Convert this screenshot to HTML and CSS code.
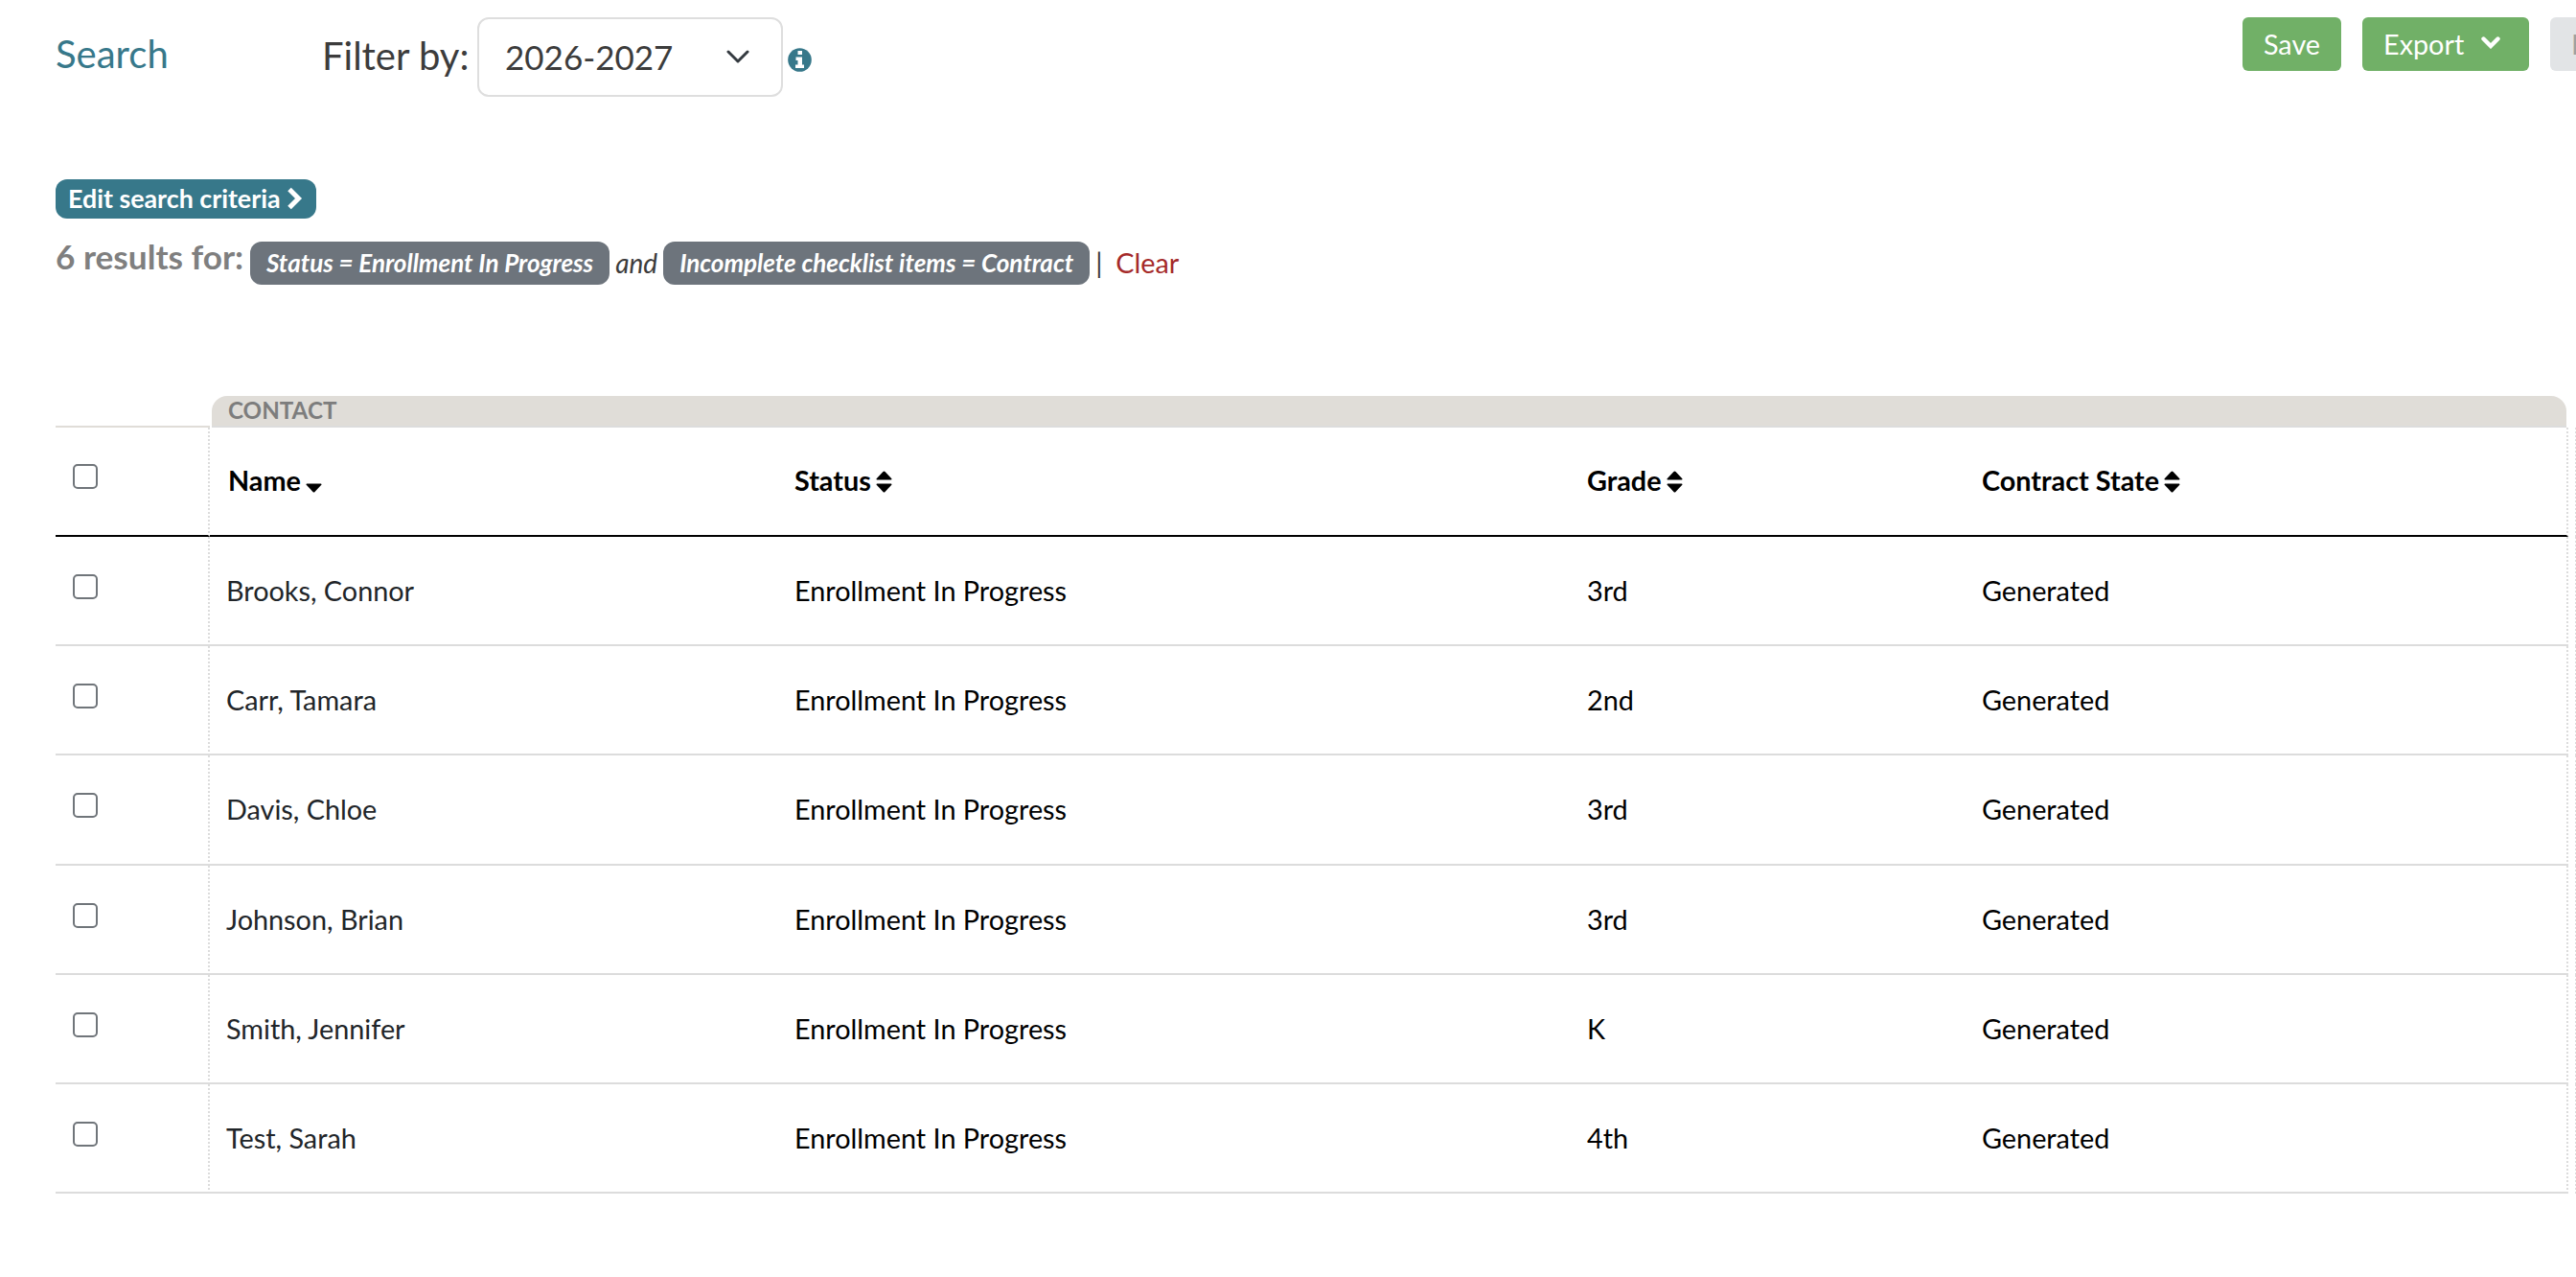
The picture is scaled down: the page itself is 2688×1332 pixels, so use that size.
FILE: index.html
```html
<!DOCTYPE html>
<html lang="en">
<head>
  <meta charset="UTF-8">
  <title>Search</title>
  <meta name="viewport" content="width=device-width, initial-scale=1.0">
  <link rel="stylesheet" href="styles.css">
</head>
<body>
  <header class="topbar">
    <a class="search-link">Search</a>
    <div class="filter">
      <span class="filter-label">Filter by:</span>
      <div class="select">
        <span>2026-2027</span>
        <svg width="24" height="14" viewBox="0 0 24 14"><path d="M2 2l10 10L22 2" fill="none" stroke="#343a40" stroke-width="3" stroke-linecap="round" stroke-linejoin="round"/></svg>
      </div>
      <svg class="info" width="25" height="25" viewBox="0 0 25 25"><circle cx="12.5" cy="12.5" r="12.3" fill="#37788a"/><path fill="#fff" d="M10.5 3h4.500v4h-4.500zM8.500 9.500h6.500v8h2v3.500h-9v-3.500h2.500v-4.500h-2z"/></svg>
    </div>
    <div class="actions">
      <button class="btn">Save</button>
      <button class="btn btn-export">Export
        <svg width="20" height="13" viewBox="0 0 20 13"><path d="M2.5 2.5L10 10l7.5-7.5" fill="none" stroke="#fff" stroke-width="4.4" stroke-linecap="round"/></svg>
      </button>
      <button class="btn btn-disabled">Edit</button>
    </div>
  </header>

  <section class="criteria">
    <button class="edit-criteria">Edit search criteria
      <svg width="17" height="24" viewBox="0 0 17 24"><path d="M3 2.500l9.500 9.500L3 21.500" fill="none" stroke="#fff" stroke-width="5"/></svg>
    </button>
    <div class="results">
      <span class="count">6 results for:</span>
      <em class="tag">Status = Enrollment In Progress</em>
      <em class="and">and</em>
      <em class="tag">Incomplete checklist items = Contract</em>
      <span class="sep">|</span>
      <a class="clear">Clear</a>
    </div>
  </section>

  <div class="table-wrap">
    <table>
      <colgroup>
        <col class="c-check"><col class="c-name"><col class="c-status"><col class="c-grade"><col class="c-state"><col>
      </colgroup>
      <thead>
        <tr class="group-row">
          <th></th>
          <th colspan="4"><div class="group">CONTACT</div></th>
          <th></th>
        </tr>
        <tr class="head-row">
          <th><input type="checkbox"></th>
          <th>Name<svg class="sort" width="17" height="23" viewBox="0 0 16 22"><path d="M1 13h14q1 0 .5 1L9 21q-1 1-2 0L.5 14Q0 13 1 13z"/></svg></th>
          <th>Status<svg class="sort" width="17" height="23" viewBox="0 0 16 22"><path d="M1 13h14q1 0 .5 1L9 21q-1 1-2 0L.5 14Q0 13 1 13zM1 9h14q1 0 .5-1L9 1q-1-1-2 0L.5 8Q0 9 1 9z"/></svg></th>
          <th>Grade<svg class="sort" width="17" height="23" viewBox="0 0 16 22"><path d="M1 13h14q1 0 .5 1L9 21q-1 1-2 0L.5 14Q0 13 1 13zM1 9h14q1 0 .5-1L9 1q-1-1-2 0L.5 8Q0 9 1 9z"/></svg></th>
          <th>Contract State<svg class="sort" width="17" height="23" viewBox="0 0 16 22"><path d="M1 13h14q1 0 .5 1L9 21q-1 1-2 0L.5 14Q0 13 1 13zM1 9h14q1 0 .5-1L9 1q-1-1-2 0L.5 8Q0 9 1 9z"/></svg></th>
          <th></th>
        </tr>
      </thead>
      <tbody>
        <tr><td><input type="checkbox"></td><td>Brooks, Connor</td><td>Enrollment In Progress</td><td>3rd</td><td>Generated</td><td></td></tr>
        <tr><td><input type="checkbox"></td><td>Carr, Tamara</td><td>Enrollment In Progress</td><td>2nd</td><td>Generated</td><td></td></tr>
        <tr class="tall"><td><input type="checkbox"></td><td>Davis, Chloe</td><td>Enrollment In Progress</td><td>3rd</td><td>Generated</td><td></td></tr>
        <tr><td><input type="checkbox"></td><td>Johnson, Brian</td><td>Enrollment In Progress</td><td>3rd</td><td>Generated</td><td></td></tr>
        <tr><td><input type="checkbox"></td><td>Smith, Jennifer</td><td>Enrollment In Progress</td><td>K</td><td>Generated</td><td></td></tr>
        <tr><td><input type="checkbox"></td><td>Test, Sarah</td><td>Enrollment In Progress</td><td>4th</td><td>Generated</td><td></td></tr>
      </tbody>
    </table>
  </div>
</body>
</html>
```
FILE: styles.css
```css
* {
  box-sizing: border-box;
}

html, body {
  margin: 0;
  padding: 0;
  width: 100%;
  height: 100%;
  overflow: hidden;
  background: #fff;
  font-family: Lato, sans-serif;
  font-size: 28.8px;
  color: #3c3c3c;
}

button {
  border: 0;
  font-family: inherit;
  white-space: nowrap;
}

.topbar {
  display: flex;
  align-items: flex-start;
  height: 187px;
  padding: 18px 0 0 58px;
}

.search-link {
  width: 278px;
  padding-top: 14px;
  font-size: 40px;
  line-height: 48px;
  color: #37788a;
}

.filter {
  display: flex;
  align-items: flex-start;
}

.filter-label {
  width: 162px;
  padding-top: 16px;
  font-size: 40px;
  line-height: 48px;
}

.select {
  display: flex;
  align-items: center;
  justify-content: space-between;
  width: 319px;
  height: 83px;
  padding: 0 33px 1px 27px;
  border: 2px solid #dedede;
  border-radius: 12px;
  font-size: 35px;
}

.info {
  margin: 32px 0 0 5px;
}

.actions {
  display: flex;
  gap: 22px;
  margin-left: auto;
  margin-right: -76px;
}

.btn {
  height: 56px;
  width: 103px;
  padding: 0;
  border-radius: 6px;
  background: #71b067;
  color: #fff;
  font-size: 28.8px;
}

.btn-export {
  display: flex;
  align-items: center;
  gap: 18px;
  width: 174px;
  padding-left: 22px;
}

.btn-export svg {
  margin-top: -3px;
}

.btn-disabled {
  background: #e2e4e6;
  color: #a0a0a0;
  text-align: left;
  padding-left: 22px;
}

.criteria {
  padding-left: 58px;
  height: 226px;
}

.edit-criteria {
  display: flex;
  align-items: center;
  gap: 6px;
  width: 272px;
  height: 41px;
  padding: 0 0 1px 13px;
  border-radius: 12px;
  background: #37788a;
  color: #fff;
  font-size: 26.8px;
  font-weight: 700;
}

.results {
  display: flex;
  margin-top: 24px;
  line-height: 45px;
}

.count {
  width: 203px;
  margin-top: -7px;
  font-size: 35.2px;
  font-weight: 700;
  color: #7f7f7f;
}

.tag {
  height: 45px;
  padding: 0 17px;
  border-radius: 12px;
  background: #6d747c;
  color: #fff;
  font-size: 26px;
  font-weight: 700;
}

.and {
  margin: 0 6px;
  font-size: 28px;
}

.sep {
  width: 27px;
  padding-left: 6px;
}

.clear {
  color: #a52a2a;
}

.table-wrap {
  padding-left: 58px;
}

table {
  width: 2631px;
  table-layout: fixed;
  border-collapse: separate;
  border-spacing: 0;
  color: #000;
}

.c-check { width: 161px; }
.c-name { width: 591px; }
.c-status { width: 827px; }
.c-grade { width: 412px; }
.c-state { width: 631px; }

th, td {
  padding: 0 0 0 19px;
  text-align: left;
  border-bottom: 2px solid #dcdcdc;
}

.group-row th {
  height: 33px;
  padding: 0;
}

.group-row th:first-child {
  border-bottom-color: #e0ddd8;
}

.group-row th + th {
  border: 0;
}

.group {
  height: 33px;
  margin: 0 2px;
  padding-left: 17px;
  border-bottom: 2px solid #dcdcdc;
  border-radius: 16px 16px 0 0;
  background: #e0ddd8;
  color: #7d7d7d;
  font-size: 24.2px;
  line-height: 29px;
}

.head-row th {
  height: 114px;
  padding-bottom: 2px;
  border-bottom-color: #000;
}

td {
  height: 114px;
}

.tall td {
  height: 115px;
  padding-bottom: 1px;
}

td:nth-child(2) {
  padding-left: 17px;
  color: #212529;
}

.head-row th:first-child,
td:first-child,
.head-row th:nth-child(5),
td:nth-child(5) {
  border-right: 2px dotted #dcdcdc;
}

.head-row th:last-child,
td:last-child {
  padding: 0;
  border-bottom: 0;
  border-right: 2px dotted #dcdcdc;
}

td:first-child,
.head-row th:first-child {
  padding-left: 18px;
}

input[type="checkbox"] {
  appearance: none;
  display: block;
  width: 26px;
  height: 26px;
  margin: -9px 0 0;
  border: 2px solid #70757a;
  border-radius: 5px;
}

.sort {
  margin-left: 5px;
  vertical-align: -2px;
}
```
